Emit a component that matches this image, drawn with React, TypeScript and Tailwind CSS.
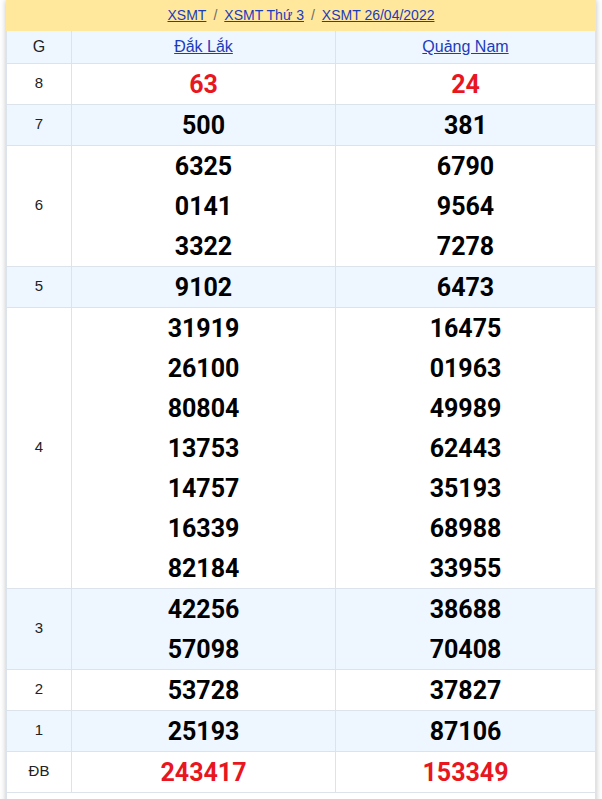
const rows: { g: string; a: string[]; b: string[]; red?: boolean }[] = [
  { g: "8", a: ["63"], b: ["24"], red: true },
  { g: "7", a: ["500"], b: ["381"] },
  { g: "6", a: ["6325", "0141", "3322"], b: ["6790", "9564", "7278"] },
  { g: "5", a: ["9102"], b: ["6473"] },
  {
    g: "4",
    a: ["31919", "26100", "80804", "13753", "14757", "16339", "82184"],
    b: ["16475", "01963", "49989", "62443", "35193", "68988", "33955"],
  },
  { g: "3", a: ["42256", "57098"], b: ["38688", "70408"] },
  { g: "2", a: ["53728"], b: ["37827"] },
  { g: "1", a: ["25193"], b: ["87106"] },
  { g: "ĐB", a: ["243417"], b: ["153349"], red: true },
];

const Nums = ({ list, red }: { list: string[]; red?: boolean }) => (
  <td className="border border-[#dde3ea] text-center align-middle p-0">
    {list.map((n) => (
      <div
        key={n}
        className={`h-10 pt-px leading-[39px] text-[25px] font-bold ${red ? "text-[#e8161f]" : "text-black"}`}
      >
        {n}
      </div>
    ))}
  </td>
);

export default function App() {
  return (
    <div className="w-[602px] h-[799px] overflow-hidden bg-white font-['Roboto',sans-serif]">
      <div className="mx-[6px] shadow-[0_0_6px_rgba(0,0,0,0.25)] bg-white">
        <div className="h-[31px] bg-[#ffe79b] flex items-center justify-center gap-[7px] text-[14px] font-['Liberation_Sans',sans-serif] text-[#6b6b6b]">
          <a href="#" className="underline text-[#1b3cbb]">XSMT</a>
          <span>/</span>
          <a href="#" className="underline text-[#1b3cbb]">XSMT Thứ 3</a>
          <span>/</span>
          <a href="#" className="underline text-[#1b3cbb]">XSMT 26/04/2022</a>
        </div>
        <table className="w-full border-collapse table-fixed font-['Liberation_Sans',sans-serif]">
          <colgroup>
            <col className="w-[65px]" />
            <col className="w-[264px]" />
            <col />
          </colgroup>
          <thead>
            <tr className="h-[32px] bg-[#eef6ff] text-[16px]">
              <th className="border border-[#dde3ea] font-normal text-[#222] border-t-0">G</th>
              <th className="border border-[#dde3ea] font-normal border-t-0">
                <a href="#" className="underline text-[#1b3cbb]">Đắk Lắk</a>
              </th>
              <th className="border border-[#dde3ea] font-normal border-t-0">
                <a href="#" className="underline text-[#1b3cbb]">Quảng Nam</a>
              </th>
            </tr>
          </thead>
          <tbody className="font-['Roboto',sans-serif]">
            {rows.map((r, i) => (
              <tr key={r.g} className={i % 2 === 1 ? "bg-[#eef6ff]" : "bg-white"}>
                <td className="border border-[#dde3ea] text-center text-[15px] text-[#222] font-['Liberation_Sans',sans-serif]">
                  {r.g}
                </td>
                <Nums list={r.a} red={r.red} />
                <Nums list={r.b} red={r.red} />
              </tr>
            ))}
            <tr className="h-10 bg-white">
              <td className="border border-[#dde3ea]" colSpan={3}></td>
            </tr>
          </tbody>
        </table>
      </div>
    </div>
  );
}
